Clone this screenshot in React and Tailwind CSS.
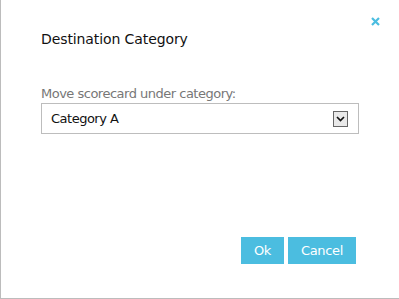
export default function App() {
  return (
    <div className="w-[399px] h-[299px] bg-white border-l border-b border-[#bcbcbc] relative" style={{ fontFamily: '"DejaVu Sans", Verdana, sans-serif' }}>
      <button className="absolute left-[368px] top-[15px] w-[13px] h-[13px] flex items-center justify-center">
        <svg width="9" height="9" viewBox="0 0 9 9">
          <path d="M1 1 L8 8 M8 1 L1 8" stroke="#4bbde0" strokeWidth="2.2" strokeLinecap="butt" />
        </svg>
      </button>
      <div className="pl-[40px] pt-[30px] pr-[40px]">
        <div className="text-[14px] leading-[18px] text-[#111] tracking-[-0.1px]">Destination Category</div>
        <div className="mt-[38px] text-[13px] leading-[16px] text-[#777] tracking-[-0.5px]">Move scorecard under category:</div>
        <div className="mt-[1px] w-[318px] h-[31px] border border-[#bdbdbd] flex items-center justify-between pl-[9px] pr-[10px]">
          <span className="text-[13px] text-[#111] tracking-[-0.5px]">Category A</span>
          <span className="w-[15px] h-[16px] border border-[#666] bg-[#e9e9e9] flex items-center justify-center">
            <svg width="9" height="6" viewBox="0 0 9 6">
              <path d="M1 1 L4.5 4.5 L8 1" stroke="#111" strokeWidth="1.7" fill="none" />
            </svg>
          </span>
        </div>
        <div className="mt-[103px] flex justify-end gap-[4px] pr-[3px]">
          <button className="w-[43px] h-[27px] bg-[#4bbde0] text-white text-[13px] tracking-[-0.3px]">Ok</button>
          <button className="w-[68px] h-[27px] bg-[#4bbde0] text-white text-[13px] tracking-[-0.3px]">Cancel</button>
        </div>
      </div>
    </div>
  );
}
